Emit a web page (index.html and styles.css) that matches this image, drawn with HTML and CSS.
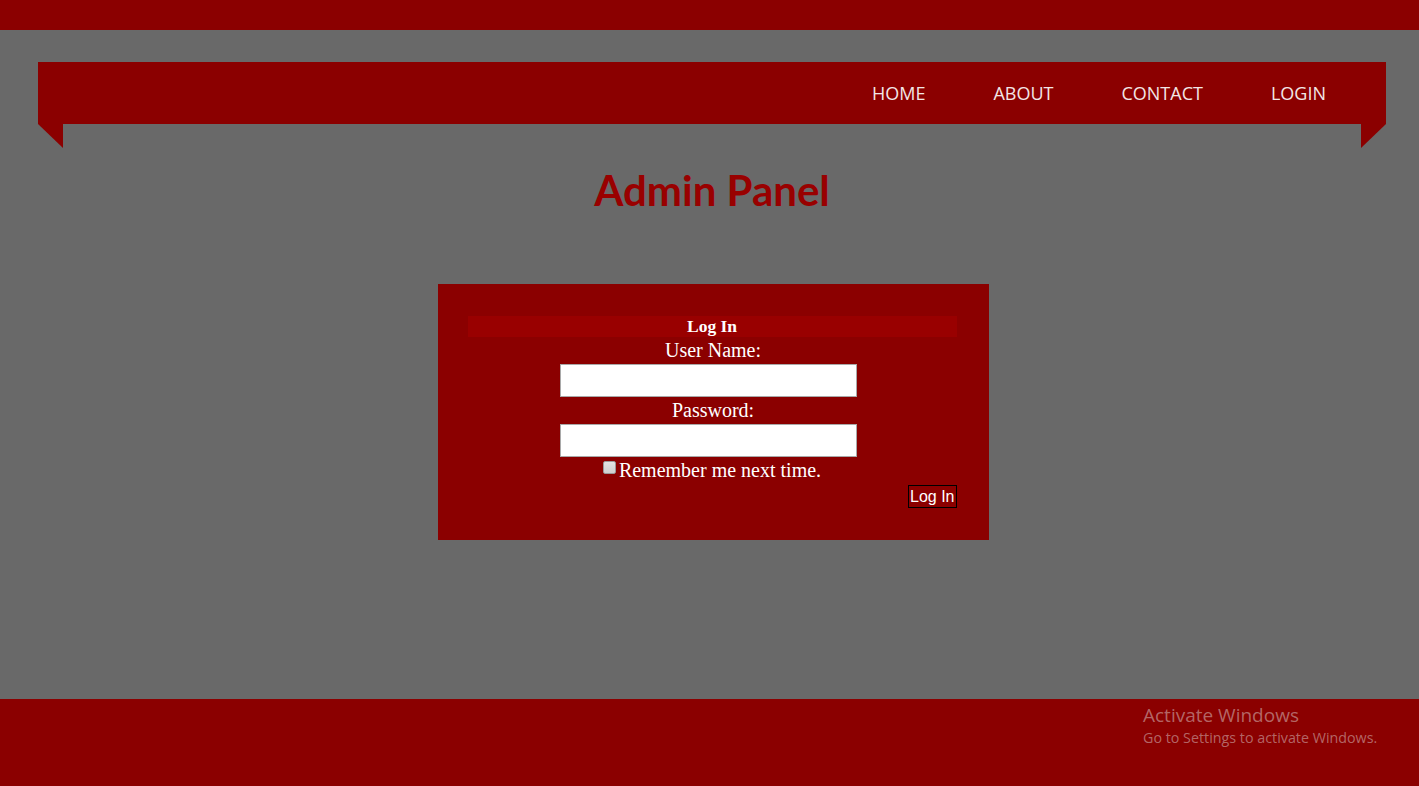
FILE: index.html
```html
<!DOCTYPE html>
<html>
<head>
<meta charset="utf-8">
<title>Admin Panel</title>
<link rel="stylesheet" href="styles.css">
</head>
<body>
<div class="page">
  <div class="topbar"></div>
  <div class="main">
    <nav class="nav">
      <a class="nav-link" href="#">HOME</a>
      <a class="nav-link" href="#">ABOUT</a>
      <a class="nav-link" href="#">CONTACT</a>
      <a class="nav-link" href="#">LOGIN</a>
    </nav>
    <h1 class="title">Admin Panel</h1>
    <div class="login-box">
      <div class="login-head">Log In</div>
      <div class="row label">User Name:</div>
      <div class="row field"><input class="text-input" type="text"></div>
      <div class="row label">Password:</div>
      <div class="row field"><input class="text-input" type="password"></div>
      <div class="row label remember"><input class="check" type="checkbox"><span>Remember me next time.</span></div>
      <div class="row submit"><button class="btn" type="button">Log In</button></div>
    </div>
  </div>
  <footer class="footer">
    <div class="watermark">
      <div class="wm-title">Activate Windows</div>
      <div class="wm-sub">Go to Settings to activate Windows.</div>
    </div>
  </footer>
</div>
</body>
</html>
```
FILE: styles.css
```css
html, body {
  margin: 0;
  padding: 0;
}
body {
  background: #696969;
  font-family: "Liberation Serif", "Times New Roman", serif;
}
.page {
  height: 786px;
  display: flex;
  flex-direction: column;
  position: relative;
  overflow: hidden;
}
.topbar {
  height: 30px;
  background: #8b0000;
  flex: none;
}
.main {
  flex: 1;
  padding: 32px 33px 0 38px;
}
.nav {
  position: relative;
  height: 62px;
  background: #8b0000;
  display: flex;
  justify-content: flex-end;
  align-items: center;
  gap: 68px;
  padding-right: 60px;
}
.nav::before,
.nav::after {
  content: "";
  position: absolute;
  top: 62px;
  width: 25px;
  height: 24px;
  background: #8b0000;
}
.nav::before {
  left: 0;
  clip-path: polygon(0 0, 100% 0, 100% 100%);
}
.nav::after {
  right: 0;
  clip-path: polygon(0 0, 100% 0, 0 100%);
}
.nav-link {
  font-family: "Open Sans", "Noto Sans", sans-serif;
  font-size: 18px;
  color: #f2e6e6;
  text-decoration: none;
}
.title {
  margin: 38px 0 0 0;
  text-align: center;
  font-family: Lato, "Open Sans", sans-serif;
  font-weight: 700;
  font-size: 42px;
  line-height: 56px;
  color: #990000;
}
.login-box {
  width: 551px;
  box-sizing: border-box;
  margin: 66px auto 0 auto;
  position: relative;
  left: 1px;
  background: #8b0000;
  padding: 32px 32px 32px 30px;
  color: #ffffff;
  display: flex;
  flex-direction: column;
}
.login-head {
  height: 21px;
  line-height: 21px;
  background: #990000;
  text-align: center;
  font-weight: 700;
  font-size: 17.5px;
}
.row {
  display: flex;
  justify-content: center;
}
.label {
  height: 27px;
  line-height: 27px;
  font-size: 20px;
  padding-left: 2px;
}
.field {
  height: 33px;
  padding-right: 8px;
}
.text-input {
  width: 297px;
  height: 33px;
  box-sizing: border-box;
  border: 1px solid #a9a9a9;
  background: #ffffff;
  margin: 0;
  padding: 1px 2px;
}
.remember {
  align-items: baseline;
  padding-left: 0;
}
.check {
  appearance: none;
  -webkit-appearance: none;
  width: 13px;
  height: 13px;
  margin: 0 3px 0 0;
  box-sizing: border-box;
  border: 1px solid #9a9a9a;
  border-radius: 2px;
  background: linear-gradient(#e4e4e4, #cfcfcf);
  align-self: flex-start;
  margin-top: 4px;
}
.submit {
  justify-content: flex-end;
  padding-top: 1px;
}
.btn {
  height: 23px;
  box-sizing: border-box;
  border: 1px solid #000000;
  background: #8b0000;
  color: #ffffff;
  font-family: "Liberation Sans", Arial, sans-serif;
  font-size: 16px;
  padding: 0 1px;
  margin: 0;
  line-height: 20px;
}
.footer {
  height: 87px;
  flex: none;
  background: #8b0000;
  position: relative;
}
.watermark {
  position: absolute;
  left: 1143px;
  top: 3px;
  color: rgba(215, 190, 190, 0.55);
  font-family: "Open Sans", "Noto Sans", sans-serif;
  white-space: nowrap;
}
.wm-title {
  font-size: 19px;
  line-height: 26px;
}
.wm-sub {
  font-size: 14.3px;
  line-height: 20px;
}
```
